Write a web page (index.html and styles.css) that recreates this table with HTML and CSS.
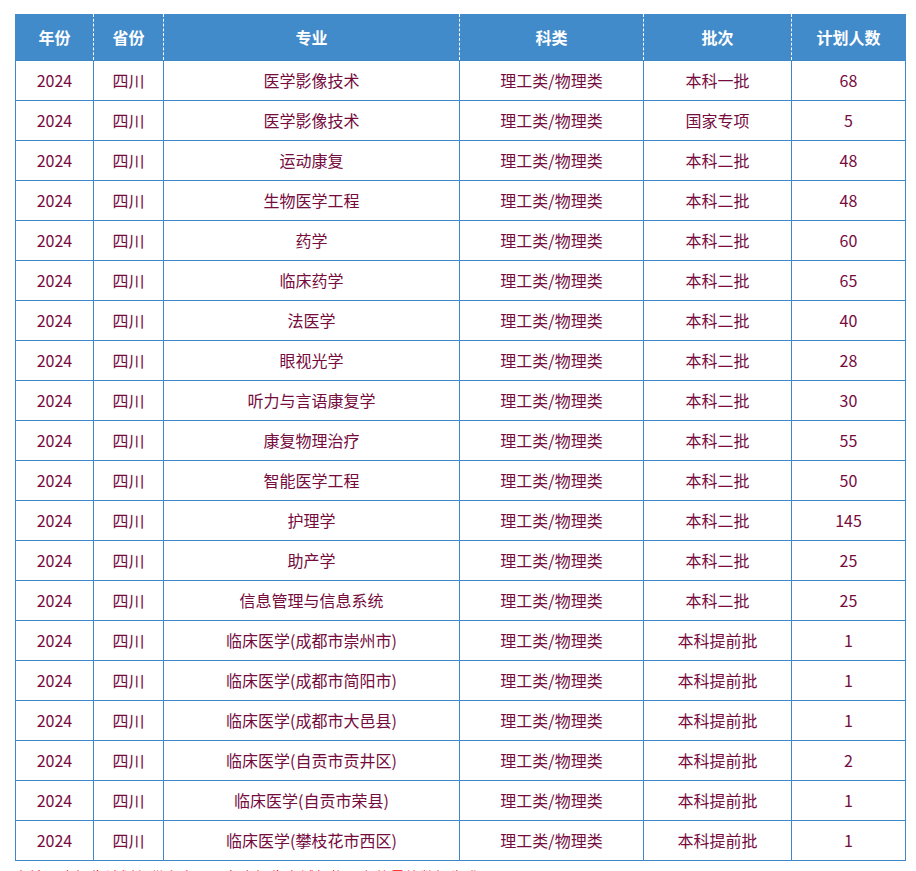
FILE: index.html
```html
<!DOCTYPE html>
<html lang="zh-CN">
<head>
<meta charset="utf-8">
<title>招生计划</title>
<link rel="stylesheet" href="styles.css">
</head>
<body>
<div class="wrap">
<table class="plan">
<colgroup>
<col class="c1"><col class="c2"><col class="c3"><col class="c4"><col class="c5"><col class="c6">
</colgroup>
<thead>
<tr><th>年份</th><th>省份</th><th>专业</th><th>科类</th><th>批次</th><th>计划人数</th></tr>
</thead>
<tbody>
<tr><td>2024</td><td>四川</td><td>医学影像技术</td><td>理工类/物理类</td><td>本科一批</td><td>68</td></tr>
<tr><td>2024</td><td>四川</td><td>医学影像技术</td><td>理工类/物理类</td><td>国家专项</td><td>5</td></tr>
<tr><td>2024</td><td>四川</td><td>运动康复</td><td>理工类/物理类</td><td>本科二批</td><td>48</td></tr>
<tr><td>2024</td><td>四川</td><td>生物医学工程</td><td>理工类/物理类</td><td>本科二批</td><td>48</td></tr>
<tr><td>2024</td><td>四川</td><td>药学</td><td>理工类/物理类</td><td>本科二批</td><td>60</td></tr>
<tr><td>2024</td><td>四川</td><td>临床药学</td><td>理工类/物理类</td><td>本科二批</td><td>65</td></tr>
<tr><td>2024</td><td>四川</td><td>法医学</td><td>理工类/物理类</td><td>本科二批</td><td>40</td></tr>
<tr><td>2024</td><td>四川</td><td>眼视光学</td><td>理工类/物理类</td><td>本科二批</td><td>28</td></tr>
<tr><td>2024</td><td>四川</td><td>听力与言语康复学</td><td>理工类/物理类</td><td>本科二批</td><td>30</td></tr>
<tr><td>2024</td><td>四川</td><td>康复物理治疗</td><td>理工类/物理类</td><td>本科二批</td><td>55</td></tr>
<tr><td>2024</td><td>四川</td><td>智能医学工程</td><td>理工类/物理类</td><td>本科二批</td><td>50</td></tr>
<tr><td>2024</td><td>四川</td><td>护理学</td><td>理工类/物理类</td><td>本科二批</td><td>145</td></tr>
<tr><td>2024</td><td>四川</td><td>助产学</td><td>理工类/物理类</td><td>本科二批</td><td>25</td></tr>
<tr><td>2024</td><td>四川</td><td>信息管理与信息系统</td><td>理工类/物理类</td><td>本科二批</td><td>25</td></tr>
<tr><td>2024</td><td>四川</td><td>临床医学(成都市崇州市)</td><td>理工类/物理类</td><td>本科提前批</td><td>1</td></tr>
<tr><td>2024</td><td>四川</td><td>临床医学(成都市简阳市)</td><td>理工类/物理类</td><td>本科提前批</td><td>1</td></tr>
<tr><td>2024</td><td>四川</td><td>临床医学(成都市大邑县)</td><td>理工类/物理类</td><td>本科提前批</td><td>1</td></tr>
<tr><td>2024</td><td>四川</td><td>临床医学(自贡市贡井区)</td><td>理工类/物理类</td><td>本科提前批</td><td>2</td></tr>
<tr><td>2024</td><td>四川</td><td>临床医学(自贡市荣县)</td><td>理工类/物理类</td><td>本科提前批</td><td>1</td></tr>
<tr><td>2024</td><td>四川</td><td>临床医学(攀枝花市西区)</td><td>理工类/物理类</td><td>本科提前批</td><td>1</td></tr>
</tbody>
</table>
<p class="note">备注：本招生计划仅供参考，以各省招生考试机构公布的最终数据为准。</p>
</div>
</body>
</html>
```

FILE: styles.css
```css
html, body {
  margin: 0;
  padding: 0;
  background: #ffffff;
}
body {
  font-family: "Microsoft YaHei", "Noto Sans CJK SC", "Noto Sans", sans-serif;
}
.wrap {
  padding: 14px 0 0 15px;
  width: 890px;
}
.plan {
  width: 890px;
  border-collapse: collapse;
  table-layout: fixed;
}
.c1 { width: 78px; }
.c2 { width: 70px; }
.c3 { width: 296px; }
.c4 { width: 184px; }
.c5 { width: 148px; }
.c6 { width: 114px; }
.plan th {
  background: #428bca;
  color: #ffffff;
  font-size: 16px;
  font-weight: bold;
  height: 46px;
  padding: 0;
  text-align: center;
  border-left: 1px dashed #ffffff;
  box-sizing: border-box;
}
.plan th:first-child { border-left: 1px solid #428bca; }
.plan th:last-child { border-right: 1px solid #428bca; }
.plan td {
  border: 1px solid #3f87c9;
  height: 40px;
  padding: 0;
  text-align: center;
  font-size: 16px;
  color: #760b3e;
  box-sizing: border-box;
}
.note {
  margin: 6px 0 0 0;
  font-size: 15px;
  color: #ff0000;
  line-height: 20px;
}
```
